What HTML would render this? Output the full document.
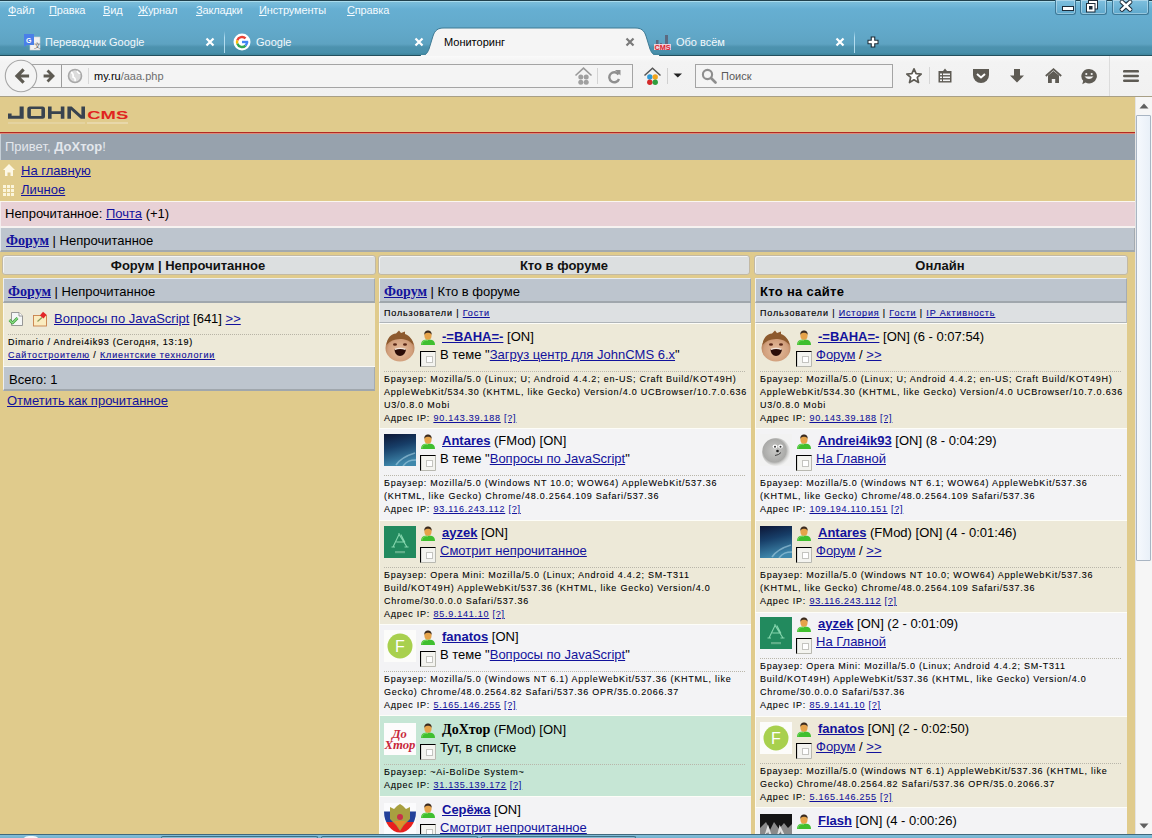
<!DOCTYPE html>
<html><head><meta charset="utf-8"><style>
html,body{margin:0;padding:0;width:1152px;height:838px;overflow:hidden;background:#e0cb8c;}
.t{position:absolute;white-space:nowrap;font-family:"Liberation Sans",sans-serif;color:#000;}
.r{position:absolute;}
a{color:inherit;text-decoration:underline;}
.sm{letter-spacing:0.76px;}
</style></head><body>
<div class="r" style="left:0px;top:0px;width:1152px;height:56px;background:linear-gradient(to bottom,#21414d 0px,#21414d 1px,#a9dcee 1px,#a9dcee 2px,#7cbdd8 2px,#72b8d9 5px,#66afd2 9px,#62a9ca 30px,#5ea3c2 44px,#4d92ae 47px,#4890ab 53px,#41879f 54px,#41879f 55px,#24505e 55px);"></div><div class="r" style="left:1055px;top:0px;width:19px;height:14px;border:1px solid #3d7896;border-top:none;border-radius:0 0 3px 3px;background:linear-gradient(#7fc0df,#5ea8cc);box-shadow:inset 0 0 0 1px rgba(255,255,255,0.35);"></div><div class="r" style="left:1080px;top:0px;width:25px;height:14px;border:1px solid #3d7896;border-top:none;border-radius:0 0 3px 3px;background:linear-gradient(#7fc0df,#5ea8cc);box-shadow:inset 0 0 0 1px rgba(255,255,255,0.35);"></div><div class="r" style="left:1112px;top:0px;width:35px;height:14px;border:1px solid #3d7896;border-top:none;border-radius:0 0 3px 3px;background:linear-gradient(#7fc0df,#5ea8cc);box-shadow:inset 0 0 0 1px rgba(255,255,255,0.35);"></div><svg class="r" style="left:1060px;top:4px;" width="16" height="10" viewBox="0 0 16 10"><rect x="2.5" y="2.5" width="11" height="4" fill="#fff" stroke="#1d2c3a" stroke-width="1"/></svg><svg class="r" style="left:1083px;top:0px;" width="18" height="14" viewBox="0 0 18 14"><rect x="5.5" y="0.5" width="9" height="8.5" fill="#fff" stroke="#1d2c3a"/><rect x="3.5" y="3.5" width="8.5" height="8.5" fill="#fff" stroke="#1d2c3a"/><rect x="6" y="6" width="3.5" height="3.5" fill="#1d2c3a"/></svg><svg class="r" style="left:1118px;top:0px;" width="16" height="12" viewBox="0 0 16 12"><path d="M4 2 L12 9.5 M12 2 L4 9.5" stroke="#1d2c3a" stroke-width="4.6" stroke-linecap="round"/><path d="M4 2 L12 9.5 M12 2 L4 9.5" stroke="#fff" stroke-width="2.6" stroke-linecap="square"/></svg><div class="t" style="left:8px;top:3.19px;font-size:11px;line-height:14px;color:#f4fbff;letter-spacing:-0.15px;"><span style="text-decoration:underline;">Ф</span>айл</div><div class="t" style="left:49px;top:3.19px;font-size:11px;line-height:14px;color:#f4fbff;letter-spacing:-0.15px;"><span style="text-decoration:underline;">П</span>равка</div><div class="t" style="left:103px;top:3.19px;font-size:11px;line-height:14px;color:#f4fbff;letter-spacing:-0.15px;"><span style="text-decoration:underline;">В</span>ид</div><div class="t" style="left:138px;top:3.19px;font-size:11px;line-height:14px;color:#f4fbff;letter-spacing:-0.15px;"><span style="text-decoration:underline;">Ж</span>урнал</div><div class="t" style="left:196px;top:3.19px;font-size:11px;line-height:14px;color:#f4fbff;letter-spacing:-0.15px;"><span style="text-decoration:underline;">З</span>акладки</div><div class="t" style="left:259px;top:3.19px;font-size:11px;line-height:14px;color:#f4fbff;letter-spacing:-0.15px;"><span style="text-decoration:underline;">И</span>нструменты</div><div class="t" style="left:347px;top:3.19px;font-size:11px;line-height:14px;color:#f4fbff;letter-spacing:-0.15px;"><span style="text-decoration:underline;">С</span>правка</div><div class="t" style="left:45px;top:35.19px;font-size:11px;line-height:14px;color:#f2f8fb;">Переводчик Google</div><div class="t" style="left:256px;top:35.19px;font-size:11px;line-height:14px;color:#f2f8fb;">Google</div><div class="t" style="left:676px;top:35.19px;font-size:11px;line-height:14px;color:#f2f8fb;">Обо всём</div><svg class="r" style="left:205px;top:36.5px;" width="10" height="10" viewBox="0 0 10 10"><path d="M1.5 1.5 L8.5 8.5 M8.5 1.5 L1.5 8.5" stroke="#fff" stroke-width="2.2"/></svg><svg class="r" style="left:414px;top:36.5px;" width="10" height="10" viewBox="0 0 10 10"><path d="M1.5 1.5 L8.5 8.5 M8.5 1.5 L1.5 8.5" stroke="#fff" stroke-width="2.2"/></svg><svg class="r" style="left:835px;top:36.5px;" width="10" height="10" viewBox="0 0 10 10"><path d="M1.5 1.5 L8.5 8.5 M8.5 1.5 L1.5 8.5" stroke="#fff" stroke-width="2.2"/></svg><div class="r" style="left:224px;top:31px;width:1px;height:22px;background:linear-gradient(rgba(200,235,250,0),rgba(200,235,250,0.8) 30%,rgba(200,235,250,0.8));"></div><div class="r" style="left:854px;top:31px;width:1px;height:22px;background:linear-gradient(rgba(200,235,250,0),rgba(200,235,250,0.8) 30%,rgba(200,235,250,0.8));"></div><svg class="r" style="left:420px;top:27px;" width="242" height="30" viewBox="0 0 242 30"><path d="M0 29 C5 29 7 27 9 22 L13 9 C15 3 18 1 24 1 L215 1 C221 1 224 3 226 9 L230 22 C232 27 234 29 240 29 V30 H0 Z" fill="#f5f5f5" stroke="#3e7a94" stroke-width="1"/></svg><div class="r" style="left:421px;top:55px;width:238px;height:2px;background:#f5f5f5;"></div><div class="t" style="left:444px;top:35.19px;font-size:11px;line-height:14px;color:#000;">Мониторинг</div><svg class="r" style="left:625px;top:36.5px;" width="10" height="10" viewBox="0 0 10 10"><path d="M1.5 1.5 L8.5 8.5 M8.5 1.5 L1.5 8.5" stroke="#7a7a7a" stroke-width="2.2"/></svg><svg class="r" style="left:866px;top:35px;" width="14" height="14" viewBox="0 0 14 14"><path d="M7 1.5 V12.5 M1.5 7 H12.5" stroke="#1b2a35" stroke-width="4.6"/><path d="M7 2.5 V11.5 M2.5 7 H11.5" stroke="#fff" stroke-width="2.4"/></svg><svg class="r" style="left:24px;top:34px;" width="17" height="17" viewBox="0 0 17 17"><rect x="6" y="3" width="10" height="13" fill="#f1f1f1" stroke="#d0d0d0" stroke-width="0.6"/><path d="M0 0 H10 V11 H3 L0 13 Z" fill="#4a7fe8"/><text x="2" y="8.5" font-size="7" font-family="Liberation Sans" font-weight="bold" fill="#fff">G</text><text x="10" y="14" font-size="7" font-family="Liberation Sans" fill="#555">文</text></svg><svg class="r" style="left:233px;top:33px;" width="18" height="18" viewBox="0 0 18 18"><circle cx="9" cy="9" r="8.5" fill="#fff"/><g fill="none" stroke-width="2.4"><path d="M12.54 5.46 A5 5 0 0 0 4.3 7.29" stroke="#ea4335"/><path d="M4.3 7.29 A5 5 0 0 0 4.3 10.71" stroke="#fbbc05"/><path d="M4.3 10.71 A5 5 0 0 0 12.54 12.54" stroke="#34a853"/><path d="M12.54 12.54 A5 5 0 0 0 14 9" stroke="#4285f4"/></g><rect x="9" y="7.8" width="6.2" height="2.4" fill="#4285f4"/></svg><svg class="r" style="left:654px;top:33px;" width="17" height="17" viewBox="0 0 17 17"><rect x="11" y="2" width="3" height="10" fill="#5b6a80"/><rect x="2" y="7" width="2.5" height="4" fill="#5b6a80"/><rect x="6" y="10" width="2" height="2" fill="#5b6a80"/><rect x="0" y="11" width="17" height="6" fill="#f0d0d8"/><text x="0.5" y="16.5" font-size="7" font-weight="bold" font-family="Liberation Sans" fill="#d8202e" textLength="16" lengthAdjust="spacingAndGlyphs">CMS</text></svg><div class="r" style="left:0px;top:56px;width:1152px;height:40px;background:linear-gradient(#fafafa,#f3f3f3 6px,#f1f1f1);"></div><div class="r" style="left:0px;top:96px;width:1152px;height:1px;background:#a89f86;"></div><div class="r" style="left:31px;top:64px;width:600px;height:22px;border:1px solid #a4a4a4;background:#f4f4f4;"></div><svg class="r" style="left:4px;top:59px;" width="34" height="34" viewBox="0 0 34 34"><circle cx="17" cy="17" r="15.7" fill="#f4f4f4" stroke="#a6a6a6" stroke-width="1.1"/><path d="M13.5 17 H23.5 M18.5 11.5 L13 17 L18.5 22.5" fill="none" stroke="#5d5a52" stroke-width="3.2" stroke-linejoin="miter" stroke-linecap="square"/></svg><svg class="r" style="left:40px;top:68px;" width="16" height="16" viewBox="0 0 16 16"><path d="M5 8 H11.5 M8.5 3.5 L13 8 L8.5 12.5" fill="none" stroke="#5d5a52" stroke-width="2.8" stroke-linecap="square"/></svg><div class="r" style="left:61px;top:65px;width:1px;height:22px;background:#9c9c9c;"></div><svg class="r" style="left:67px;top:68px;" width="16" height="16" viewBox="0 0 16 16"><circle cx="8" cy="8" r="6.5" fill="#dcdcdc" stroke="#a8a8a8" stroke-width="1.6"/><path d="M4 4 Q7 6 6 9 Q9 10 8 13 M10 3 Q12 6 13 5" fill="none" stroke="#fff" stroke-width="1.6"/></svg><div class="r" style="left:88px;top:68px;width:1px;height:16px;background:#d8d8d8;"></div><div class="t" style="left:94px;top:69.19px;font-size:11px;line-height:14px;"><span style="color:#000">my.ru</span><span style="color:#6d6d6d">/aaa.php</span></div><svg class="r" style="left:574px;top:67px;" width="19" height="18" viewBox="0 0 19 18"><path d="M1.5 8.5 L9.5 1.2 L17.5 8.5" fill="none" stroke="#9a9a9a" stroke-width="1.6"/><circle cx="6.8" cy="10" r="2.5" fill="#a0a0a0"/><circle cx="12.2" cy="10" r="2.5" fill="#a0a0a0"/><circle cx="6.8" cy="15.3" r="2.5" fill="#a0a0a0"/><circle cx="12.2" cy="15.3" r="2.5" fill="#a0a0a0"/></svg><div class="r" style="left:597px;top:68px;width:1px;height:16px;background:#d4d4d4;"></div><svg class="r" style="left:606px;top:69px;" width="16" height="15" viewBox="0 0 16 15"><path d="M12.5 5.5 A5 5 0 1 0 13 10" fill="none" stroke="#8f8f8f" stroke-width="2.4"/><path d="M9 1 L14.5 1 L14.5 6.5 Z" fill="#8f8f8f"/></svg><svg class="r" style="left:643px;top:67px;" width="19" height="18" viewBox="0 0 19 18"><path d="M1.5 8.5 L9.5 1.2 L17.5 8.5" fill="none" stroke="#555" stroke-width="1.5"/><circle cx="6.8" cy="10" r="2.7" fill="#2d9ad8"/><circle cx="12.2" cy="10" r="2.7" fill="#f2a51e"/><circle cx="6.8" cy="15.3" r="2.7" fill="#d32a2a"/><circle cx="12.2" cy="15.3" r="2.7" fill="#2e9e3e"/></svg><div class="r" style="left:667px;top:68px;width:1px;height:16px;background:#d0d0d0;"></div><svg class="r" style="left:673px;top:73px;" width="10" height="5" viewBox="0 0 10 5"><path d="M0.5 0.5 H9 L4.75 4.5 Z" fill="#222"/></svg><div class="r" style="left:695px;top:64px;width:196px;height:22px;border:1px solid #a4a4a4;background:#f4f4f4;"></div><svg class="r" style="left:701px;top:68px;" width="17" height="16" viewBox="0 0 17 16"><circle cx="6.5" cy="6.5" r="4.6" fill="none" stroke="#8e8e8e" stroke-width="2.1"/><path d="M10 10 L14.5 14.5" stroke="#8e8e8e" stroke-width="2.6" stroke-linecap="round"/></svg><div class="t" style="left:721px;top:69.19px;font-size:11px;line-height:14px;color:#5a5a5a;">Поиск</div><svg class="r" style="left:905px;top:67px;" width="18" height="18" viewBox="0 0 18 18"><path d="M9 1.8 L11.1 6.6 L16.2 7 L12.3 10.4 L13.5 15.5 L9 12.8 L4.5 15.5 L5.7 10.4 L1.8 7 L6.9 6.6 Z" fill="#fff" stroke="#5e5b54" stroke-width="1.7" stroke-linejoin="round"/></svg><div class="r" style="left:929px;top:67px;width:1px;height:17px;background:#d6d6d6;"></div><svg class="r" style="left:937px;top:67px;" width="16" height="17" viewBox="0 0 16 17"><path d="M1.5 4 H6 L8 1.5 L10 4 H14.5 V15.5 H1.5 Z" fill="#5e5b54"/><rect x="3" y="6.5" width="2" height="1.6" fill="#f4f4f4"/><rect x="6" y="6.5" width="7" height="1.6" fill="#f4f4f4"/><rect x="3" y="9.5" width="2" height="1.6" fill="#f4f4f4"/><rect x="6" y="9.5" width="7" height="1.6" fill="#f4f4f4"/><rect x="3" y="12.5" width="2" height="1.6" fill="#f4f4f4"/><rect x="6" y="12.5" width="7" height="1.6" fill="#f4f4f4"/></svg><svg class="r" style="left:972px;top:68px;" width="18" height="16" viewBox="0 0 18 16"><path d="M1 1 H17 V7 A8 8 0 0 1 1 7 Z" fill="#5e5b54"/><path d="M5 6 L9 9.5 L13 6" fill="none" stroke="#fff" stroke-width="2"/></svg><svg class="r" style="left:1009px;top:68px;" width="16" height="16" viewBox="0 0 16 16"><path d="M5 1 H11 V7.5 H15 L8 14.5 L1 7.5 H5 Z" fill="#5e5b54"/></svg><svg class="r" style="left:1045px;top:68px;" width="17" height="16" viewBox="0 0 17 16"><path d="M0.8 8 L8.5 1.2 L16.2 8" fill="none" stroke="#5e5b54" stroke-width="1.8"/><path d="M3 7.5 L8.5 3 L14 7.5 V15 H10.2 V11 H6.8 V15 H3 Z" fill="#5e5b54"/></svg><svg class="r" style="left:1080px;top:68px;" width="18" height="17" viewBox="0 0 18 17"><path d="M9 1 A7.8 7.2 0 1 1 5.5 14.6 L2.3 16.3 L3.2 12.8 A7.8 7.2 0 0 1 9 1 Z" fill="#5e5b54"/><circle cx="6.3" cy="6" r="1.1" fill="#f4f4f4"/><circle cx="11.7" cy="6" r="1.1" fill="#f4f4f4"/><path d="M4.5 8.5 Q9 13.5 13.5 8.5 Z" fill="#f4f4f4"/></svg><div class="r" style="left:1109px;top:56px;width:1px;height:40px;background:#dcdcdc;"></div><svg class="r" style="left:1122px;top:69px;" width="18" height="14" viewBox="0 0 18 14"><rect x="1" y="1" width="16" height="2.6" rx="1.2" fill="#5e5b54"/><rect x="1" y="5.7" width="16" height="2.6" rx="1.2" fill="#5e5b54"/><rect x="1" y="10.4" width="16" height="2.6" rx="1.2" fill="#5e5b54"/></svg><div class="r" style="left:0px;top:97px;width:1135px;height:35px;background:#e0cb8c;"></div><svg class="r" style="left:0px;top:100px;" width="140" height="30" viewBox="0 0 140 30"><g fill="#38434f" fill-rule="evenodd"><path d="M19.6 6.5 H23.7 V18.7 H8 V13.4 H11.6 V15.8 H19.6 Z"/><path d="M29.8 6.5 H42.5 Q45 6.5 45 9 V16.2 Q45 18.7 42.5 18.7 H29.8 Q27.3 18.7 27.3 16.2 V9 Q27.3 6.5 29.8 6.5 Z M30.9 9.1 V16.1 H41.4 V9.1 Z"/><path d="M48 6.5 H51.6 V11.3 H60.8 V6.5 H64.4 V18.7 H60.8 V13.9 H51.6 V18.7 H48 Z"/><path d="M67.4 6.5 H71.6 L81.4 15.2 V6.5 H85 V18.7 H80.8 L71 10 V18.7 H67.4 Z"/></g><text x="87.3" y="18.7" font-family="Liberation Sans" font-weight="bold" font-size="10" fill="#e02420" textLength="41" lengthAdjust="spacingAndGlyphs">CMS</text><rect x="8" y="22.5" width="77" height="1" fill="#e8dcb4"/><rect x="87" y="22.5" width="41" height="1" fill="#efe6c8"/></svg><div class="r" style="left:0px;top:132px;width:1135px;height:1px;background:#b32a22;"></div><div class="r" style="left:0px;top:133px;width:1135px;height:1px;background:#dc8a78;"></div><div class="r" style="left:0px;top:134px;width:1135px;height:26px;background:#97a2ad;border-left:1px solid #c5ced6;box-sizing:border-box;"></div><div class="t" style="left:5px;top:138.50px;font-size:13px;line-height:16px;color:#e3e7ec;">Привет, <b>ДоХтор</b>!</div><div class="r" style="left:0px;top:160px;width:1135px;height:41px;background:#e0cb8c;"></div><svg class="r" style="left:2px;top:163px;" width="14" height="14" viewBox="0 0 14 14"><path d="M1 7 L7 1 L13 7 H11 V13 H8.5 V9.5 H5.5 V13 H3 V7 Z" fill="#fdf8e6"/></svg><svg class="r" style="left:3px;top:185px;" width="12" height="12" viewBox="0 0 12 12"><rect x="0" y="0" width="3" height="3" fill="#fbf5dc"/><rect x="0" y="4" width="3" height="3" fill="#fbf5dc"/><rect x="0" y="8" width="3" height="3" fill="#fbf5dc"/><rect x="4" y="0" width="3" height="3" fill="#fbf5dc"/><rect x="4" y="4" width="3" height="3" fill="#fbf5dc"/><rect x="4" y="8" width="3" height="3" fill="#fbf5dc"/><rect x="8" y="0" width="3" height="3" fill="#fbf5dc"/><rect x="8" y="4" width="3" height="3" fill="#fbf5dc"/><rect x="8" y="8" width="3" height="3" fill="#fbf5dc"/></svg><div class="t" style="left:21px;top:162.80px;font-size:13px;line-height:16px;"><span style="color:#12129c;text-decoration:underline;">На главную</span></div><div class="t" style="left:21px;top:182.10px;font-size:13px;line-height:16px;"><span style="color:#12129c;text-decoration:underline;">Личное</span></div><div class="r" style="left:0px;top:201px;width:1135px;height:1px;background:#fbf7ef;"></div><div class="r" style="left:0px;top:202px;width:1135px;height:24px;background:#e8d1d6;border-left:1px solid #f4ecee;box-sizing:border-box;"></div><div class="r" style="left:0px;top:226px;width:1135px;height:2px;background:#f6f2f0;"></div><div class="t" style="left:5px;top:206.30px;font-size:13px;line-height:16px;">Непрочитанное: <span style="color:#12129c;text-decoration:underline;">Почта</span> (+1)</div><div class="r" style="left:0px;top:228px;width:1135px;height:24px;background:#bdc5ce;border-left:1px solid #e6eaee;border-right:1px solid #a3aab0;border-bottom:2px solid #a2a9ae;box-sizing:border-box;"></div><div class="t" style="left:6px;top:232.50px;font-size:13px;line-height:16px;"><span style="color:#12129c;text-decoration:underline;font-weight:bold;font-family:'Liberation Serif';font-size:14px;">Форум</span> | Непрочитанное</div><div class="r" style="left:2px;top:255px;width:374px;height:20px;box-sizing:border-box;border:1px solid #c2b9a4;border-radius:3px;background:#dcdfe0;box-shadow:inset 1px 1px 0 #f3f4f4;"></div><div class="t" style="left:2px;top:257.50px;font-size:13px;line-height:16px;width:372px;text-align:center;font-weight:bold;color:#111;">Форум | Непрочитанное</div><div class="r" style="left:378px;top:255px;width:372px;height:20px;box-sizing:border-box;border:1px solid #c2b9a4;border-radius:3px;background:#dcdfe0;box-shadow:inset 1px 1px 0 #f3f4f4;"></div><div class="t" style="left:378px;top:257.50px;font-size:13px;line-height:16px;width:372px;text-align:center;font-weight:bold;color:#111;">Кто в форуме</div><div class="r" style="left:754px;top:255px;width:374px;height:20px;box-sizing:border-box;border:1px solid #c2b9a4;border-radius:3px;background:#dcdfe0;box-shadow:inset 1px 1px 0 #f3f4f4;"></div><div class="t" style="left:754px;top:257.50px;font-size:13px;line-height:16px;width:372px;text-align:center;font-weight:bold;color:#111;">Онлайн</div><div class="r" style="left:3px;top:278px;width:372px;height:25px;box-sizing:border-box;background:#bdc5ce;border-top:1px solid #e9ecef;border-left:1px solid #eef0f2;border-right:1px solid #a5acb2;border-bottom:2px solid #a0a7ad;"></div><div class="t" style="left:8px;top:283.50px;font-size:13px;line-height:16px;"><span style="color:#12129c;text-decoration:underline;font-weight:bold;font-family:'Liberation Serif';font-size:14px;">Форум</span> | Непрочитанное</div><div class="r" style="left:3px;top:303px;width:372px;height:63px;background:#ede9d8;border-left:1px solid #faf8f0;box-sizing:border-box;"></div><svg class="r" style="left:8px;top:311px;" width="17" height="16" viewBox="0 0 17 16"><path d="M3.5 1.5 H11 L14.5 5 V14.5 H3.5 Z" fill="#f4f6f6" stroke="#8c8c8c" stroke-width="0.9"/><path d="M11 1.5 V5 H14.5" fill="#fff" stroke="#8c8c8c" stroke-width="0.9"/><path d="M1.5 9 L4.5 12 L9.5 7" fill="none" stroke="#3d9a3a" stroke-width="2.6" stroke-linejoin="round"/><path d="M1.5 9 L4.5 12 L9.5 7" fill="none" stroke="#8ee08a" stroke-width="1.1"/></svg><svg class="r" style="left:32px;top:311px;" width="17" height="16" viewBox="0 0 17 16"><rect x="1.5" y="4.5" width="13" height="10.5" fill="#fbecc0" stroke="#c8804a" stroke-width="0.9"/><path d="M5.5 10.5 L10 6.5" stroke="#8a9a5a" stroke-width="1.1"/><path d="M11 0.8 L14.6 3.8 L11.5 7.6 L7.9 4.6 Z" fill="#e2262a"/></svg><div class="t" style="left:54px;top:310.50px;font-size:13px;line-height:16px;"><span style="color:#12129c;text-decoration:underline;">Вопросы по JavaScript</span> [641] <span style="color:#12129c;text-decoration:underline;">&gt;&gt;</span></div><div class="r" style="left:8px;top:334px;width:362px;height:1px;background-image:linear-gradient(to right,#b8b4a6 50%,transparent 50%);background-size:2px 1px;"></div><div class="t" style="left:8px;top:336.78px;font-size:9px;line-height:11px;letter-spacing:0.76px;-webkit-text-stroke-width:0.15px;">Dimario / Andrei4ik93 (Сегодня, 13:19)</div><div class="t" style="left:8px;top:349.88px;font-size:9px;line-height:11px;letter-spacing:0.85px;-webkit-text-stroke-width:0.15px;"><span style="color:#12129c;text-decoration:underline;">Сайтостроителю</span> / <span style="color:#12129c;text-decoration:underline;">Клиентские технологии</span></div><div class="r" style="left:3px;top:366px;width:372px;height:1px;background:#fbfaf6;"></div><div class="r" style="left:3px;top:367px;width:372px;height:24px;box-sizing:border-box;background:#bdc5ce;border-left:1px solid #eef0f2;border-right:1px solid #a5acb2;border-bottom:2px solid #a0a7ad;"></div><div class="t" style="left:9px;top:372.00px;font-size:13px;line-height:16px;">Всего: 1</div><div class="t" style="left:7px;top:393.10px;font-size:13px;line-height:16px;"><span style="color:#12129c;text-decoration:underline;">Отметить как прочитанное</span></div><div class="r" style="left:379px;top:278px;width:372px;height:25px;box-sizing:border-box;background:#bdc5ce;border-top:1px solid #e9ecef;border-left:1px solid #eef0f2;border-right:1px solid #a5acb2;border-bottom:2px solid #a0a7ad;"></div><div class="t" style="left:384px;top:283.50px;font-size:13px;line-height:16px;"><span style="color:#12129c;text-decoration:underline;font-weight:bold;font-family:'Liberation Serif';font-size:14px;">Форум</span> | Кто в форуме</div><div class="r" style="left:379px;top:303px;width:372px;height:20px;box-sizing:border-box;background:#dde0e2;border-left:1px solid #f2f3f4;border-right:1px solid #b9bec2;border-bottom:1px solid #b0b5b9;"></div><div class="t" style="left:384px;top:308.38px;font-size:9px;line-height:11px;letter-spacing:0.84px;-webkit-text-stroke-width:0.15px;">Пользователи | <span style="color:#12129c;text-decoration:underline;">Гости</span></div><div class="r" style="left:755px;top:278px;width:372px;height:25px;box-sizing:border-box;background:#bdc5ce;border-top:1px solid #e9ecef;border-left:1px solid #eef0f2;border-right:1px solid #a5acb2;border-bottom:2px solid #a0a7ad;"></div><div class="t" style="left:760px;top:283.50px;font-size:13px;line-height:16px;"><b style="letter-spacing:0.3px">Кто на сайте</b></div><div class="r" style="left:755px;top:303px;width:372px;height:20px;box-sizing:border-box;background:#dde0e2;border-left:1px solid #f2f3f4;border-right:1px solid #b9bec2;border-bottom:1px solid #b0b5b9;"></div><div class="t" style="left:760px;top:308.38px;font-size:9px;line-height:11px;letter-spacing:0.84px;-webkit-text-stroke-width:0.15px;">Пользователи | <span style="color:#12129c;text-decoration:underline;">История</span> | <span style="color:#12129c;text-decoration:underline;">Гости</span> | <span style="color:#12129c;text-decoration:underline;">IP Активность</span></div><div class="r" style="left:379px;top:323px;width:372px;height:1px;background:#fdfdf8;"></div><div class="r" style="left:379px;top:324px;width:372px;height:104px;background:#ede9d8;border-left:1px solid #fbfaf2;box-sizing:border-box;"></div><svg class="r" style="left:384px;top:329.5px;" width="32" height="32" viewBox="0 0 32 32"><defs><radialGradient id="gb384" cx="0.5" cy="0.6" r="0.6"><stop offset="0" stop-color="#e7bfa0"/><stop offset="0.7" stop-color="#d19f7c"/><stop offset="1" stop-color="#a87048"/></radialGradient></defs><ellipse cx="16" cy="18" rx="14.5" ry="13.5" fill="url(#gb384)"/><path d="M2.5 15 C3 8 7 4 12 3.5 L15 0.5 L17 3 L21 1.5 L21 4 C26 6 29 10 29.5 15 C26 10.5 21 9 16 9 C10 9 5.5 11 2.5 15 Z" fill="#8d5a2e"/><ellipse cx="11" cy="14.5" rx="2" ry="1.2" fill="#5a2818"/><ellipse cx="21" cy="14.5" rx="2" ry="1.2" fill="#5a2818"/><path d="M10.5 19.5 Q16 17.5 22 19.5 Q21 26 16 26 Q11 26 10.5 19.5 Z" fill="#2a0c08"/><path d="M11 19.3 Q16 17.3 21.5 19.3" fill="none" stroke="#f2e6dc" stroke-width="1.3"/></svg><svg class="r" style="left:420px;top:330px;" width="16" height="16" viewBox="0 0 16 16"><path d="M1 15 C1 10.5 4 9.5 8 9.5 C12 9.5 15 10.5 15 15 Z" fill="#3fbf2f"/><path d="M2 14.5 C2 11 4.5 10.3 8 10.3" fill="none" stroke="#8ae070" stroke-width="0.8"/><ellipse cx="8" cy="5.6" rx="3.6" ry="4.2" fill="#e5a34a"/><path d="M4.3 5 C4.2 1.5 6 0.5 8 0.5 C10 0.5 11.8 1.5 11.7 5 C11 3.2 9.5 2.8 8 2.8 C6.5 2.8 5 3.2 4.3 5 Z" fill="#3a2a1e"/></svg><svg class="r" style="left:420px;top:351px;" width="16" height="16" viewBox="0 0 16 16"><rect x="0" y="0" width="16" height="16" fill="#f3f3ef"/><path d="M0.5 16 V0.5 H16" fill="none" stroke="#000" stroke-width="1.2"/><path d="M15.5 0.5 V15.5 H0.5" fill="none" stroke="#b8b8b0" stroke-width="1"/><rect x="6.5" y="5.5" width="6" height="6" fill="#fff" stroke="#c4c4c0"/></svg><div class="t" style="left:442px;top:328.50px;font-size:13px;line-height:16px;"><span style="color:#12129c;text-decoration:underline;font-weight:bold;">-=BAHA=-</span> [ON]</div><div class="t" style="left:440px;top:346.50px;font-size:13px;line-height:16px;">В теме "<span style="color:#12129c;text-decoration:underline;">Загруз центр для JohnCMS 6.x</span>"</div><div class="r" style="left:384px;top:371px;width:362px;height:1px;background-image:linear-gradient(to right,#b9b6aa 50%,transparent 50%);background-size:2px 1px;"></div><div class="t" style="left:384px;top:374.38px;font-size:9px;line-height:11px;letter-spacing:0.76px;-webkit-text-stroke-width:0.08px;">Браузер: Mozilla/5.0 (Linux; U; Android 4.4.2; en-US; Craft Build/KOT49H)</div><div class="t" style="left:384px;top:387.33px;font-size:9px;line-height:11px;letter-spacing:0.76px;-webkit-text-stroke-width:0.08px;">AppleWebKit/534.30 (KHTML, like Gecko) Version/4.0 UCBrowser/10.7.0.636</div><div class="t" style="left:384px;top:400.28px;font-size:9px;line-height:11px;letter-spacing:0.76px;-webkit-text-stroke-width:0.08px;">U3/0.8.0 Mobi</div><div class="t" style="left:384px;top:413.23px;font-size:9px;line-height:11px;letter-spacing:0.76px;-webkit-text-stroke-width:0.08px;">Адрес IP: <span style="color:#12129c;text-decoration:underline;">90.143.39.188</span> <span style="color:#12129c;text-decoration:underline;">[?]</span></div><div class="r" style="left:379px;top:428px;width:372px;height:1px;background:#fdfdf8;"></div><div class="r" style="left:379px;top:429px;width:372px;height:91px;background:#f3f3f5;border-left:1px solid #fbfaf2;box-sizing:border-box;"></div><svg class="r" style="left:384px;top:433.5px;" width="32" height="32" viewBox="0 0 32 32"><defs><linearGradient id="ga384" x1="0" y1="0" x2="0.25" y2="1"><stop offset="0" stop-color="#0c1535"/><stop offset="0.45" stop-color="#173e68"/><stop offset="1" stop-color="#3f88ac"/></linearGradient></defs><rect width="32" height="32" fill="url(#ga384)"/><path d="M12 31 C16 25 21 22 31 19 M19 32 C23 27 26 26 32 26" stroke="#a8d0e2" stroke-width="1.6" fill="none" opacity="0.6"/></svg><svg class="r" style="left:420px;top:434px;" width="16" height="16" viewBox="0 0 16 16"><path d="M1 15 C1 10.5 4 9.5 8 9.5 C12 9.5 15 10.5 15 15 Z" fill="#3fbf2f"/><path d="M2 14.5 C2 11 4.5 10.3 8 10.3" fill="none" stroke="#8ae070" stroke-width="0.8"/><ellipse cx="8" cy="5.6" rx="3.6" ry="4.2" fill="#e5a34a"/><path d="M4.3 5 C4.2 1.5 6 0.5 8 0.5 C10 0.5 11.8 1.5 11.7 5 C11 3.2 9.5 2.8 8 2.8 C6.5 2.8 5 3.2 4.3 5 Z" fill="#3a2a1e"/></svg><svg class="r" style="left:420px;top:455px;" width="16" height="16" viewBox="0 0 16 16"><rect x="0" y="0" width="16" height="16" fill="#f3f3ef"/><path d="M0.5 16 V0.5 H16" fill="none" stroke="#000" stroke-width="1.2"/><path d="M15.5 0.5 V15.5 H0.5" fill="none" stroke="#b8b8b0" stroke-width="1"/><rect x="6.5" y="5.5" width="6" height="6" fill="#fff" stroke="#c4c4c0"/></svg><div class="t" style="left:442px;top:432.50px;font-size:13px;line-height:16px;"><span style="color:#12129c;text-decoration:underline;font-weight:bold;">Antares</span> (FMod) [ON]</div><div class="t" style="left:440px;top:450.50px;font-size:13px;line-height:16px;">В теме "<span style="color:#12129c;text-decoration:underline;">Вопросы по JavaScript</span>"</div><div class="r" style="left:384px;top:475px;width:362px;height:1px;background-image:linear-gradient(to right,#b9b6aa 50%,transparent 50%);background-size:2px 1px;"></div><div class="t" style="left:384px;top:478.38px;font-size:9px;line-height:11px;letter-spacing:0.76px;-webkit-text-stroke-width:0.08px;">Браузер: Mozilla/5.0 (Windows NT 10.0; WOW64) AppleWebKit/537.36</div><div class="t" style="left:384px;top:491.33px;font-size:9px;line-height:11px;letter-spacing:0.76px;-webkit-text-stroke-width:0.08px;">(KHTML, like Gecko) Chrome/48.0.2564.109 Safari/537.36</div><div class="t" style="left:384px;top:504.28px;font-size:9px;line-height:11px;letter-spacing:0.76px;-webkit-text-stroke-width:0.08px;">Адрес IP: <span style="color:#12129c;text-decoration:underline;">93.116.243.112</span> <span style="color:#12129c;text-decoration:underline;">[?]</span></div><div class="r" style="left:379px;top:520px;width:372px;height:1px;background:#fdfdf8;"></div><div class="r" style="left:379px;top:521px;width:372px;height:103px;background:#ede9d8;border-left:1px solid #fbfaf2;box-sizing:border-box;"></div><svg class="r" style="left:384px;top:525.5px;" width="32" height="32" viewBox="0 0 32 32"><rect width="32" height="32" fill="#228a5e"/><path d="M9 21 L15.5 7.5 M14.5 7.5 L23 21 M16.8 8.5 L21 16.5 M12.3 16 H20.3 M7.5 21 H11 M20.5 21 H24.5" stroke="#86d6ae" stroke-width="1.1" fill="none"/><rect x="11" y="25" width="10" height="2.2" fill="#5fae88"/></svg><svg class="r" style="left:420px;top:526px;" width="16" height="16" viewBox="0 0 16 16"><path d="M1 15 C1 10.5 4 9.5 8 9.5 C12 9.5 15 10.5 15 15 Z" fill="#3fbf2f"/><path d="M2 14.5 C2 11 4.5 10.3 8 10.3" fill="none" stroke="#8ae070" stroke-width="0.8"/><ellipse cx="8" cy="5.6" rx="3.6" ry="4.2" fill="#e5a34a"/><path d="M4.3 5 C4.2 1.5 6 0.5 8 0.5 C10 0.5 11.8 1.5 11.7 5 C11 3.2 9.5 2.8 8 2.8 C6.5 2.8 5 3.2 4.3 5 Z" fill="#3a2a1e"/></svg><svg class="r" style="left:420px;top:547px;" width="16" height="16" viewBox="0 0 16 16"><rect x="0" y="0" width="16" height="16" fill="#f3f3ef"/><path d="M0.5 16 V0.5 H16" fill="none" stroke="#000" stroke-width="1.2"/><path d="M15.5 0.5 V15.5 H0.5" fill="none" stroke="#b8b8b0" stroke-width="1"/><rect x="6.5" y="5.5" width="6" height="6" fill="#fff" stroke="#c4c4c0"/></svg><div class="t" style="left:442px;top:524.50px;font-size:13px;line-height:16px;"><span style="color:#12129c;text-decoration:underline;font-weight:bold;">ayzek</span> [ON]</div><div class="t" style="left:440px;top:542.50px;font-size:13px;line-height:16px;"><span style="color:#12129c;text-decoration:underline;">Смотрит непрочитанное</span></div><div class="r" style="left:384px;top:567px;width:362px;height:1px;background-image:linear-gradient(to right,#b9b6aa 50%,transparent 50%);background-size:2px 1px;"></div><div class="t" style="left:384px;top:570.38px;font-size:9px;line-height:11px;letter-spacing:0.76px;-webkit-text-stroke-width:0.08px;">Браузер: Opera Mini: Mozilla/5.0 (Linux; Android 4.4.2; SM-T311</div><div class="t" style="left:384px;top:583.33px;font-size:9px;line-height:11px;letter-spacing:0.76px;-webkit-text-stroke-width:0.08px;">Build/KOT49H) AppleWebKit/537.36 (KHTML, like Gecko) Version/4.0</div><div class="t" style="left:384px;top:596.28px;font-size:9px;line-height:11px;letter-spacing:0.76px;-webkit-text-stroke-width:0.08px;">Chrome/30.0.0.0 Safari/537.36</div><div class="t" style="left:384px;top:609.23px;font-size:9px;line-height:11px;letter-spacing:0.76px;-webkit-text-stroke-width:0.08px;">Адрес IP: <span style="color:#12129c;text-decoration:underline;">85.9.141.10</span> <span style="color:#12129c;text-decoration:underline;">[?]</span></div><div class="r" style="left:379px;top:624px;width:372px;height:1px;background:#fdfdf8;"></div><div class="r" style="left:379px;top:625px;width:372px;height:90px;background:#f3f3f5;border-left:1px solid #fbfaf2;box-sizing:border-box;"></div><svg class="r" style="left:384px;top:629.5px;" width="32" height="32" viewBox="0 0 32 32"><rect width="32" height="32" fill="#fcfcfa"/><circle cx="16" cy="16" r="12.5" fill="#a8d04e"/><text x="11" y="22" font-family="Liberation Sans" font-size="16" fill="#fff">F</text></svg><svg class="r" style="left:420px;top:630px;" width="16" height="16" viewBox="0 0 16 16"><path d="M1 15 C1 10.5 4 9.5 8 9.5 C12 9.5 15 10.5 15 15 Z" fill="#3fbf2f"/><path d="M2 14.5 C2 11 4.5 10.3 8 10.3" fill="none" stroke="#8ae070" stroke-width="0.8"/><ellipse cx="8" cy="5.6" rx="3.6" ry="4.2" fill="#e5a34a"/><path d="M4.3 5 C4.2 1.5 6 0.5 8 0.5 C10 0.5 11.8 1.5 11.7 5 C11 3.2 9.5 2.8 8 2.8 C6.5 2.8 5 3.2 4.3 5 Z" fill="#3a2a1e"/></svg><svg class="r" style="left:420px;top:651px;" width="16" height="16" viewBox="0 0 16 16"><rect x="0" y="0" width="16" height="16" fill="#f3f3ef"/><path d="M0.5 16 V0.5 H16" fill="none" stroke="#000" stroke-width="1.2"/><path d="M15.5 0.5 V15.5 H0.5" fill="none" stroke="#b8b8b0" stroke-width="1"/><rect x="6.5" y="5.5" width="6" height="6" fill="#fff" stroke="#c4c4c0"/></svg><div class="t" style="left:442px;top:628.50px;font-size:13px;line-height:16px;"><span style="color:#12129c;text-decoration:underline;font-weight:bold;">fanatos</span> [ON]</div><div class="t" style="left:440px;top:646.50px;font-size:13px;line-height:16px;">В теме "<span style="color:#12129c;text-decoration:underline;">Вопросы по JavaScript</span>"</div><div class="r" style="left:384px;top:671px;width:362px;height:1px;background-image:linear-gradient(to right,#b9b6aa 50%,transparent 50%);background-size:2px 1px;"></div><div class="t" style="left:384px;top:674.38px;font-size:9px;line-height:11px;letter-spacing:0.76px;-webkit-text-stroke-width:0.08px;">Браузер: Mozilla/5.0 (Windows NT 6.1) AppleWebKit/537.36 (KHTML, like</div><div class="t" style="left:384px;top:687.33px;font-size:9px;line-height:11px;letter-spacing:0.76px;-webkit-text-stroke-width:0.08px;">Gecko) Chrome/48.0.2564.82 Safari/537.36 OPR/35.0.2066.37</div><div class="t" style="left:384px;top:700.28px;font-size:9px;line-height:11px;letter-spacing:0.76px;-webkit-text-stroke-width:0.08px;">Адрес IP: <span style="color:#12129c;text-decoration:underline;">5.165.146.255</span> <span style="color:#12129c;text-decoration:underline;">[?]</span></div><div class="r" style="left:379px;top:715px;width:372px;height:1px;background:#fdfdf8;"></div><div class="r" style="left:379px;top:716px;width:372px;height:80px;background:#c6e6d5;border-left:1px solid #fbfaf2;box-sizing:border-box;"></div><svg class="r" style="left:384px;top:722.5px;" width="32" height="32" viewBox="0 0 32 32"><rect width="32" height="32" fill="#fdfcfc"/><text x="8" y="15" font-family="Liberation Serif" font-style="italic" font-weight="bold" font-size="12.5" fill="#c8283a">До</text><text x="0.5" y="26" font-family="Liberation Serif" font-style="italic" font-weight="bold" font-size="12.5" fill="#c8283a" textLength="31" lengthAdjust="spacingAndGlyphs">Хтор</text></svg><svg class="r" style="left:420px;top:723px;" width="16" height="16" viewBox="0 0 16 16"><path d="M1 15 C1 10.5 4 9.5 8 9.5 C12 9.5 15 10.5 15 15 Z" fill="#3fbf2f"/><path d="M2 14.5 C2 11 4.5 10.3 8 10.3" fill="none" stroke="#8ae070" stroke-width="0.8"/><ellipse cx="8" cy="5.6" rx="3.6" ry="4.2" fill="#e5a34a"/><path d="M4.3 5 C4.2 1.5 6 0.5 8 0.5 C10 0.5 11.8 1.5 11.7 5 C11 3.2 9.5 2.8 8 2.8 C6.5 2.8 5 3.2 4.3 5 Z" fill="#3a2a1e"/></svg><svg class="r" style="left:420px;top:744px;" width="16" height="16" viewBox="0 0 16 16"><rect x="0" y="0" width="16" height="16" fill="#f3f3ef"/><path d="M0.5 16 V0.5 H16" fill="none" stroke="#000" stroke-width="1.2"/><path d="M15.5 0.5 V15.5 H0.5" fill="none" stroke="#b8b8b0" stroke-width="1"/><rect x="6.5" y="5.5" width="6" height="6" fill="#fff" stroke="#c4c4c0"/></svg><div class="t" style="left:442px;top:721.50px;font-size:13px;line-height:16px;"><b style="font-family:'Liberation Serif';font-size:14px">ДоХтор</b> (FMod) [ON]</div><div class="t" style="left:440px;top:739.50px;font-size:13px;line-height:16px;">Тут, в списке</div><div class="r" style="left:384px;top:764px;width:362px;height:1px;background-image:linear-gradient(to right,#b9b6aa 50%,transparent 50%);background-size:2px 1px;"></div><div class="t" style="left:384px;top:767.38px;font-size:9px;line-height:11px;letter-spacing:0.76px;-webkit-text-stroke-width:0.08px;">Браузер: ~Ai-BoliDe System~</div><div class="t" style="left:384px;top:780.33px;font-size:9px;line-height:11px;letter-spacing:0.76px;-webkit-text-stroke-width:0.08px;">Адрес IP: <span style="color:#12129c;text-decoration:underline;">31.135.139.172</span> <span style="color:#12129c;text-decoration:underline;">[?]</span></div><div class="r" style="left:379px;top:796px;width:372px;height:1px;background:#fdfdf8;"></div><div class="r" style="left:379px;top:797px;width:372px;height:59px;background:#f3f3f5;border-left:1px solid #fbfaf2;box-sizing:border-box;"></div><svg class="r" style="left:384px;top:802.5px;" width="32" height="32" viewBox="0 0 32 32"><defs><clipPath id="cs384"><path d="M0 8.5 H32 A16 21 0 0 1 0 8.5 Z"/></clipPath></defs><rect width="32" height="32" fill="#fbfbfd"/><g clip-path="url(#cs384)"><rect y="8" width="32" height="11" fill="#23409a"/><rect y="19" width="32" height="14" fill="#e8201e"/></g><path d="M6 4 L10 6 L13 3 L16 1 L19 3 L22 6 L26 4 L26 16 L20 22 L16 28 L12 22 L6 16 Z" fill="#a8a040"/><path d="M10 18 L16 26 L22 18 Z" fill="#e0902a"/><circle cx="16" cy="14" r="3" fill="#c8304a"/></svg><svg class="r" style="left:420px;top:803px;" width="16" height="16" viewBox="0 0 16 16"><path d="M1 15 C1 10.5 4 9.5 8 9.5 C12 9.5 15 10.5 15 15 Z" fill="#3fbf2f"/><path d="M2 14.5 C2 11 4.5 10.3 8 10.3" fill="none" stroke="#8ae070" stroke-width="0.8"/><ellipse cx="8" cy="5.6" rx="3.6" ry="4.2" fill="#e5a34a"/><path d="M4.3 5 C4.2 1.5 6 0.5 8 0.5 C10 0.5 11.8 1.5 11.7 5 C11 3.2 9.5 2.8 8 2.8 C6.5 2.8 5 3.2 4.3 5 Z" fill="#3a2a1e"/></svg><svg class="r" style="left:420px;top:824px;" width="16" height="16" viewBox="0 0 16 16"><rect x="0" y="0" width="16" height="16" fill="#f3f3ef"/><path d="M0.5 16 V0.5 H16" fill="none" stroke="#000" stroke-width="1.2"/><path d="M15.5 0.5 V15.5 H0.5" fill="none" stroke="#b8b8b0" stroke-width="1"/><rect x="6.5" y="5.5" width="6" height="6" fill="#fff" stroke="#c4c4c0"/></svg><div class="t" style="left:442px;top:801.50px;font-size:13px;line-height:16px;"><span style="color:#12129c;text-decoration:underline;font-weight:bold;">Серёжа</span> [ON]</div><div class="t" style="left:440px;top:819.50px;font-size:13px;line-height:16px;"><span style="color:#12129c;text-decoration:underline;">Смотрит непрочитанное</span></div><div class="r" style="left:384px;top:844px;width:362px;height:1px;background-image:linear-gradient(to right,#b9b6aa 50%,transparent 50%);background-size:2px 1px;"></div><div class="r" style="left:755px;top:323px;width:372px;height:1px;background:#fdfdf8;"></div><div class="r" style="left:755px;top:324px;width:372px;height:104px;background:#ede9d8;border-left:1px solid #fbfaf2;box-sizing:border-box;"></div><svg class="r" style="left:760px;top:329.5px;" width="32" height="32" viewBox="0 0 32 32"><defs><radialGradient id="gb760" cx="0.5" cy="0.6" r="0.6"><stop offset="0" stop-color="#e7bfa0"/><stop offset="0.7" stop-color="#d19f7c"/><stop offset="1" stop-color="#a87048"/></radialGradient></defs><ellipse cx="16" cy="18" rx="14.5" ry="13.5" fill="url(#gb760)"/><path d="M2.5 15 C3 8 7 4 12 3.5 L15 0.5 L17 3 L21 1.5 L21 4 C26 6 29 10 29.5 15 C26 10.5 21 9 16 9 C10 9 5.5 11 2.5 15 Z" fill="#8d5a2e"/><ellipse cx="11" cy="14.5" rx="2" ry="1.2" fill="#5a2818"/><ellipse cx="21" cy="14.5" rx="2" ry="1.2" fill="#5a2818"/><path d="M10.5 19.5 Q16 17.5 22 19.5 Q21 26 16 26 Q11 26 10.5 19.5 Z" fill="#2a0c08"/><path d="M11 19.3 Q16 17.3 21.5 19.3" fill="none" stroke="#f2e6dc" stroke-width="1.3"/></svg><svg class="r" style="left:796px;top:330px;" width="16" height="16" viewBox="0 0 16 16"><path d="M1 15 C1 10.5 4 9.5 8 9.5 C12 9.5 15 10.5 15 15 Z" fill="#3fbf2f"/><path d="M2 14.5 C2 11 4.5 10.3 8 10.3" fill="none" stroke="#8ae070" stroke-width="0.8"/><ellipse cx="8" cy="5.6" rx="3.6" ry="4.2" fill="#e5a34a"/><path d="M4.3 5 C4.2 1.5 6 0.5 8 0.5 C10 0.5 11.8 1.5 11.7 5 C11 3.2 9.5 2.8 8 2.8 C6.5 2.8 5 3.2 4.3 5 Z" fill="#3a2a1e"/></svg><svg class="r" style="left:796px;top:351px;" width="16" height="16" viewBox="0 0 16 16"><rect x="0" y="0" width="16" height="16" fill="#f3f3ef"/><path d="M0.5 16 V0.5 H16" fill="none" stroke="#000" stroke-width="1.2"/><path d="M15.5 0.5 V15.5 H0.5" fill="none" stroke="#b8b8b0" stroke-width="1"/><rect x="6.5" y="5.5" width="6" height="6" fill="#fff" stroke="#c4c4c0"/></svg><div class="t" style="left:818px;top:328.50px;font-size:13px;line-height:16px;"><span style="color:#12129c;text-decoration:underline;font-weight:bold;">-=BAHA=-</span> [ON] (6 - 0:07:54)</div><div class="t" style="left:816px;top:346.50px;font-size:13px;line-height:16px;"><span style="color:#12129c;text-decoration:underline;">Форум</span> / <span style="color:#12129c;text-decoration:underline;">&gt;&gt;</span></div><div class="r" style="left:760px;top:371px;width:362px;height:1px;background-image:linear-gradient(to right,#b9b6aa 50%,transparent 50%);background-size:2px 1px;"></div><div class="t" style="left:760px;top:374.38px;font-size:9px;line-height:11px;letter-spacing:0.76px;-webkit-text-stroke-width:0.08px;">Браузер: Mozilla/5.0 (Linux; U; Android 4.4.2; en-US; Craft Build/KOT49H)</div><div class="t" style="left:760px;top:387.33px;font-size:9px;line-height:11px;letter-spacing:0.76px;-webkit-text-stroke-width:0.08px;">AppleWebKit/534.30 (KHTML, like Gecko) Version/4.0 UCBrowser/10.7.0.636</div><div class="t" style="left:760px;top:400.28px;font-size:9px;line-height:11px;letter-spacing:0.76px;-webkit-text-stroke-width:0.08px;">U3/0.8.0 Mobi</div><div class="t" style="left:760px;top:413.23px;font-size:9px;line-height:11px;letter-spacing:0.76px;-webkit-text-stroke-width:0.08px;">Адрес IP: <span style="color:#12129c;text-decoration:underline;">90.143.39.188</span> <span style="color:#12129c;text-decoration:underline;">[?]</span></div><div class="r" style="left:755px;top:428px;width:372px;height:1px;background:#fdfdf8;"></div><div class="r" style="left:755px;top:429px;width:372px;height:91px;background:#f3f3f5;border-left:1px solid #fbfaf2;box-sizing:border-box;"></div><svg class="r" style="left:760px;top:433.5px;" width="32" height="32" viewBox="0 0 32 32"><defs><radialGradient id="gn760" cx="0.45" cy="0.45" r="0.55"><stop offset="0" stop-color="#c8c8c6"/><stop offset="0.75" stop-color="#aaaaa8"/><stop offset="1" stop-color="#d8d8d6" stop-opacity="0.3"/></radialGradient></defs><rect width="32" height="32" fill="#f2f2f2"/><ellipse cx="16" cy="18" rx="14" ry="14" fill="url(#gn760)"/><ellipse cx="15" cy="12.5" rx="2.4" ry="2" fill="#fff"/><ellipse cx="20.5" cy="12.5" rx="2.4" ry="2" fill="#fff"/><circle cx="15" cy="12.8" r="1" fill="#333"/><circle cx="20.5" cy="12.8" r="1" fill="#333"/><circle cx="17.5" cy="17" r="1.3" fill="#222"/><path d="M15 21.5 Q19 21 21 18.5" stroke="#333" stroke-width="0.9" fill="none"/></svg><svg class="r" style="left:796px;top:434px;" width="16" height="16" viewBox="0 0 16 16"><path d="M1 15 C1 10.5 4 9.5 8 9.5 C12 9.5 15 10.5 15 15 Z" fill="#3fbf2f"/><path d="M2 14.5 C2 11 4.5 10.3 8 10.3" fill="none" stroke="#8ae070" stroke-width="0.8"/><ellipse cx="8" cy="5.6" rx="3.6" ry="4.2" fill="#e5a34a"/><path d="M4.3 5 C4.2 1.5 6 0.5 8 0.5 C10 0.5 11.8 1.5 11.7 5 C11 3.2 9.5 2.8 8 2.8 C6.5 2.8 5 3.2 4.3 5 Z" fill="#3a2a1e"/></svg><svg class="r" style="left:796px;top:455px;" width="16" height="16" viewBox="0 0 16 16"><rect x="0" y="0" width="16" height="16" fill="#f3f3ef"/><path d="M0.5 16 V0.5 H16" fill="none" stroke="#000" stroke-width="1.2"/><path d="M15.5 0.5 V15.5 H0.5" fill="none" stroke="#b8b8b0" stroke-width="1"/><rect x="6.5" y="5.5" width="6" height="6" fill="#fff" stroke="#c4c4c0"/></svg><div class="t" style="left:818px;top:432.50px;font-size:13px;line-height:16px;"><span style="color:#12129c;text-decoration:underline;font-weight:bold;">Andrei4ik93</span> [ON] (8 - 0:04:29)</div><div class="t" style="left:816px;top:450.50px;font-size:13px;line-height:16px;"><span style="color:#12129c;text-decoration:underline;">На Главной</span></div><div class="r" style="left:760px;top:475px;width:362px;height:1px;background-image:linear-gradient(to right,#b9b6aa 50%,transparent 50%);background-size:2px 1px;"></div><div class="t" style="left:760px;top:478.38px;font-size:9px;line-height:11px;letter-spacing:0.76px;-webkit-text-stroke-width:0.08px;">Браузер: Mozilla/5.0 (Windows NT 6.1; WOW64) AppleWebKit/537.36</div><div class="t" style="left:760px;top:491.33px;font-size:9px;line-height:11px;letter-spacing:0.76px;-webkit-text-stroke-width:0.08px;">(KHTML, like Gecko) Chrome/48.0.2564.109 Safari/537.36</div><div class="t" style="left:760px;top:504.28px;font-size:9px;line-height:11px;letter-spacing:0.76px;-webkit-text-stroke-width:0.08px;">Адрес IP: <span style="color:#12129c;text-decoration:underline;">109.194.110.151</span> <span style="color:#12129c;text-decoration:underline;">[?]</span></div><div class="r" style="left:755px;top:520px;width:372px;height:1px;background:#fdfdf8;"></div><div class="r" style="left:755px;top:521px;width:372px;height:91px;background:#ede9d8;border-left:1px solid #fbfaf2;box-sizing:border-box;"></div><svg class="r" style="left:760px;top:525.5px;" width="32" height="32" viewBox="0 0 32 32"><defs><linearGradient id="ga760" x1="0" y1="0" x2="0.25" y2="1"><stop offset="0" stop-color="#0c1535"/><stop offset="0.45" stop-color="#173e68"/><stop offset="1" stop-color="#3f88ac"/></linearGradient></defs><rect width="32" height="32" fill="url(#ga760)"/><path d="M12 31 C16 25 21 22 31 19 M19 32 C23 27 26 26 32 26" stroke="#a8d0e2" stroke-width="1.6" fill="none" opacity="0.6"/></svg><svg class="r" style="left:796px;top:526px;" width="16" height="16" viewBox="0 0 16 16"><path d="M1 15 C1 10.5 4 9.5 8 9.5 C12 9.5 15 10.5 15 15 Z" fill="#3fbf2f"/><path d="M2 14.5 C2 11 4.5 10.3 8 10.3" fill="none" stroke="#8ae070" stroke-width="0.8"/><ellipse cx="8" cy="5.6" rx="3.6" ry="4.2" fill="#e5a34a"/><path d="M4.3 5 C4.2 1.5 6 0.5 8 0.5 C10 0.5 11.8 1.5 11.7 5 C11 3.2 9.5 2.8 8 2.8 C6.5 2.8 5 3.2 4.3 5 Z" fill="#3a2a1e"/></svg><svg class="r" style="left:796px;top:547px;" width="16" height="16" viewBox="0 0 16 16"><rect x="0" y="0" width="16" height="16" fill="#f3f3ef"/><path d="M0.5 16 V0.5 H16" fill="none" stroke="#000" stroke-width="1.2"/><path d="M15.5 0.5 V15.5 H0.5" fill="none" stroke="#b8b8b0" stroke-width="1"/><rect x="6.5" y="5.5" width="6" height="6" fill="#fff" stroke="#c4c4c0"/></svg><div class="t" style="left:818px;top:524.50px;font-size:13px;line-height:16px;"><span style="color:#12129c;text-decoration:underline;font-weight:bold;">Antares</span> (FMod) [ON] (4 - 0:01:46)</div><div class="t" style="left:816px;top:542.50px;font-size:13px;line-height:16px;"><span style="color:#12129c;text-decoration:underline;">Форум</span> / <span style="color:#12129c;text-decoration:underline;">&gt;&gt;</span></div><div class="r" style="left:760px;top:567px;width:362px;height:1px;background-image:linear-gradient(to right,#b9b6aa 50%,transparent 50%);background-size:2px 1px;"></div><div class="t" style="left:760px;top:570.38px;font-size:9px;line-height:11px;letter-spacing:0.76px;-webkit-text-stroke-width:0.08px;">Браузер: Mozilla/5.0 (Windows NT 10.0; WOW64) AppleWebKit/537.36</div><div class="t" style="left:760px;top:583.33px;font-size:9px;line-height:11px;letter-spacing:0.76px;-webkit-text-stroke-width:0.08px;">(KHTML, like Gecko) Chrome/48.0.2564.109 Safari/537.36</div><div class="t" style="left:760px;top:596.28px;font-size:9px;line-height:11px;letter-spacing:0.76px;-webkit-text-stroke-width:0.08px;">Адрес IP: <span style="color:#12129c;text-decoration:underline;">93.116.243.112</span> <span style="color:#12129c;text-decoration:underline;">[?]</span></div><div class="r" style="left:755px;top:612px;width:372px;height:1px;background:#fdfdf8;"></div><div class="r" style="left:755px;top:613px;width:372px;height:103px;background:#f3f3f5;border-left:1px solid #fbfaf2;box-sizing:border-box;"></div><svg class="r" style="left:760px;top:616.5px;" width="32" height="32" viewBox="0 0 32 32"><rect width="32" height="32" fill="#228a5e"/><path d="M9 21 L15.5 7.5 M14.5 7.5 L23 21 M16.8 8.5 L21 16.5 M12.3 16 H20.3 M7.5 21 H11 M20.5 21 H24.5" stroke="#86d6ae" stroke-width="1.1" fill="none"/><rect x="11" y="25" width="10" height="2.2" fill="#5fae88"/></svg><svg class="r" style="left:796px;top:617px;" width="16" height="16" viewBox="0 0 16 16"><path d="M1 15 C1 10.5 4 9.5 8 9.5 C12 9.5 15 10.5 15 15 Z" fill="#3fbf2f"/><path d="M2 14.5 C2 11 4.5 10.3 8 10.3" fill="none" stroke="#8ae070" stroke-width="0.8"/><ellipse cx="8" cy="5.6" rx="3.6" ry="4.2" fill="#e5a34a"/><path d="M4.3 5 C4.2 1.5 6 0.5 8 0.5 C10 0.5 11.8 1.5 11.7 5 C11 3.2 9.5 2.8 8 2.8 C6.5 2.8 5 3.2 4.3 5 Z" fill="#3a2a1e"/></svg><svg class="r" style="left:796px;top:638px;" width="16" height="16" viewBox="0 0 16 16"><rect x="0" y="0" width="16" height="16" fill="#f3f3ef"/><path d="M0.5 16 V0.5 H16" fill="none" stroke="#000" stroke-width="1.2"/><path d="M15.5 0.5 V15.5 H0.5" fill="none" stroke="#b8b8b0" stroke-width="1"/><rect x="6.5" y="5.5" width="6" height="6" fill="#fff" stroke="#c4c4c0"/></svg><div class="t" style="left:818px;top:615.50px;font-size:13px;line-height:16px;"><span style="color:#12129c;text-decoration:underline;font-weight:bold;">ayzek</span> [ON] (2 - 0:01:09)</div><div class="t" style="left:816px;top:633.50px;font-size:13px;line-height:16px;"><span style="color:#12129c;text-decoration:underline;">На Главной</span></div><div class="r" style="left:760px;top:658px;width:362px;height:1px;background-image:linear-gradient(to right,#b9b6aa 50%,transparent 50%);background-size:2px 1px;"></div><div class="t" style="left:760px;top:661.38px;font-size:9px;line-height:11px;letter-spacing:0.76px;-webkit-text-stroke-width:0.08px;">Браузер: Opera Mini: Mozilla/5.0 (Linux; Android 4.4.2; SM-T311</div><div class="t" style="left:760px;top:674.33px;font-size:9px;line-height:11px;letter-spacing:0.76px;-webkit-text-stroke-width:0.08px;">Build/KOT49H) AppleWebKit/537.36 (KHTML, like Gecko) Version/4.0</div><div class="t" style="left:760px;top:687.28px;font-size:9px;line-height:11px;letter-spacing:0.76px;-webkit-text-stroke-width:0.08px;">Chrome/30.0.0.0 Safari/537.36</div><div class="t" style="left:760px;top:700.23px;font-size:9px;line-height:11px;letter-spacing:0.76px;-webkit-text-stroke-width:0.08px;">Адрес IP: <span style="color:#12129c;text-decoration:underline;">85.9.141.10</span> <span style="color:#12129c;text-decoration:underline;">[?]</span></div><div class="r" style="left:755px;top:716px;width:372px;height:1px;background:#fdfdf8;"></div><div class="r" style="left:755px;top:717px;width:372px;height:90px;background:#ede9d8;border-left:1px solid #fbfaf2;box-sizing:border-box;"></div><svg class="r" style="left:760px;top:721.5px;" width="32" height="32" viewBox="0 0 32 32"><rect width="32" height="32" fill="#fcfcfa"/><circle cx="16" cy="16" r="12.5" fill="#a8d04e"/><text x="11" y="22" font-family="Liberation Sans" font-size="16" fill="#fff">F</text></svg><svg class="r" style="left:796px;top:722px;" width="16" height="16" viewBox="0 0 16 16"><path d="M1 15 C1 10.5 4 9.5 8 9.5 C12 9.5 15 10.5 15 15 Z" fill="#3fbf2f"/><path d="M2 14.5 C2 11 4.5 10.3 8 10.3" fill="none" stroke="#8ae070" stroke-width="0.8"/><ellipse cx="8" cy="5.6" rx="3.6" ry="4.2" fill="#e5a34a"/><path d="M4.3 5 C4.2 1.5 6 0.5 8 0.5 C10 0.5 11.8 1.5 11.7 5 C11 3.2 9.5 2.8 8 2.8 C6.5 2.8 5 3.2 4.3 5 Z" fill="#3a2a1e"/></svg><svg class="r" style="left:796px;top:743px;" width="16" height="16" viewBox="0 0 16 16"><rect x="0" y="0" width="16" height="16" fill="#f3f3ef"/><path d="M0.5 16 V0.5 H16" fill="none" stroke="#000" stroke-width="1.2"/><path d="M15.5 0.5 V15.5 H0.5" fill="none" stroke="#b8b8b0" stroke-width="1"/><rect x="6.5" y="5.5" width="6" height="6" fill="#fff" stroke="#c4c4c0"/></svg><div class="t" style="left:818px;top:720.50px;font-size:13px;line-height:16px;"><span style="color:#12129c;text-decoration:underline;font-weight:bold;">fanatos</span> [ON] (2 - 0:02:50)</div><div class="t" style="left:816px;top:738.50px;font-size:13px;line-height:16px;"><span style="color:#12129c;text-decoration:underline;">Форум</span> / <span style="color:#12129c;text-decoration:underline;">&gt;&gt;</span></div><div class="r" style="left:760px;top:763px;width:362px;height:1px;background-image:linear-gradient(to right,#b9b6aa 50%,transparent 50%);background-size:2px 1px;"></div><div class="t" style="left:760px;top:766.38px;font-size:9px;line-height:11px;letter-spacing:0.76px;-webkit-text-stroke-width:0.08px;">Браузер: Mozilla/5.0 (Windows NT 6.1) AppleWebKit/537.36 (KHTML, like</div><div class="t" style="left:760px;top:779.33px;font-size:9px;line-height:11px;letter-spacing:0.76px;-webkit-text-stroke-width:0.08px;">Gecko) Chrome/48.0.2564.82 Safari/537.36 OPR/35.0.2066.37</div><div class="t" style="left:760px;top:792.28px;font-size:9px;line-height:11px;letter-spacing:0.76px;-webkit-text-stroke-width:0.08px;">Адрес IP: <span style="color:#12129c;text-decoration:underline;">5.165.146.255</span> <span style="color:#12129c;text-decoration:underline;">[?]</span></div><div class="r" style="left:755px;top:807px;width:372px;height:1px;background:#fdfdf8;"></div><div class="r" style="left:755px;top:808px;width:372px;height:59px;background:#f3f3f5;border-left:1px solid #fbfaf2;box-sizing:border-box;"></div><svg class="r" style="left:760px;top:813.5px;" width="32" height="32" viewBox="0 0 32 32"><rect width="32" height="32" fill="#151515"/><path d="M0 14 L6 8 L10 16 L14 8 L19 15 L24 9 L28 14 L32 10 V32 H0 Z" fill="#8a8a8a"/><path d="M3 30 L8 14 L13 28 M16 30 L20 14 L26 26" stroke="#e0e0e0" stroke-width="2.2" fill="none"/><path d="M6 20 L10 26 M19 20 L22 25" stroke="#202020" stroke-width="2.5"/></svg><svg class="r" style="left:796px;top:814px;" width="16" height="16" viewBox="0 0 16 16"><path d="M1 15 C1 10.5 4 9.5 8 9.5 C12 9.5 15 10.5 15 15 Z" fill="#3fbf2f"/><path d="M2 14.5 C2 11 4.5 10.3 8 10.3" fill="none" stroke="#8ae070" stroke-width="0.8"/><ellipse cx="8" cy="5.6" rx="3.6" ry="4.2" fill="#e5a34a"/><path d="M4.3 5 C4.2 1.5 6 0.5 8 0.5 C10 0.5 11.8 1.5 11.7 5 C11 3.2 9.5 2.8 8 2.8 C6.5 2.8 5 3.2 4.3 5 Z" fill="#3a2a1e"/></svg><svg class="r" style="left:796px;top:835px;" width="16" height="16" viewBox="0 0 16 16"><rect x="0" y="0" width="16" height="16" fill="#f3f3ef"/><path d="M0.5 16 V0.5 H16" fill="none" stroke="#000" stroke-width="1.2"/><path d="M15.5 0.5 V15.5 H0.5" fill="none" stroke="#b8b8b0" stroke-width="1"/><rect x="6.5" y="5.5" width="6" height="6" fill="#fff" stroke="#c4c4c0"/></svg><div class="t" style="left:818px;top:812.50px;font-size:13px;line-height:16px;"><span style="color:#12129c;text-decoration:underline;font-weight:bold;">Flash</span> [ON] (4 - 0:00:26)</div><div class="t" style="left:816px;top:830.50px;font-size:13px;line-height:16px;"><span style="color:#12129c;text-decoration:underline;">Форум</span> / <span style="color:#12129c;text-decoration:underline;">&gt;&gt;</span></div><div class="r" style="left:760px;top:855px;width:362px;height:1px;background-image:linear-gradient(to right,#b9b6aa 50%,transparent 50%);background-size:2px 1px;"></div><div class="r" style="left:1135px;top:97px;width:17px;height:738px;background:#f6f6f6;border-left:1px solid #e4e4e4;box-sizing:border-box;"></div><svg class="r" style="left:1136px;top:97px;" width="16" height="18" viewBox="0 0 16 18"><path d="M3.5 11.5 L8 6.5 L12.5 11.5 Z" fill="#606060"/></svg><div class="r" style="left:1136px;top:115px;width:15px;height:446px;box-sizing:border-box;border:1px solid #a9b5c3;background:linear-gradient(to right,#f6f9fd,#e9f0f8);border-radius:1px;"></div><svg class="r" style="left:1136px;top:817px;" width="16" height="18" viewBox="0 0 16 18"><path d="M3.5 6.5 L8 11.5 L12.5 6.5 Z" fill="#606060"/></svg><div class="r" style="left:0px;top:834px;width:1152px;height:1px;background:#40687c;"></div><div class="r" style="left:0px;top:835px;width:1152px;height:3px;background:linear-gradient(#82bdd8,#74b2d0);"></div><div class="r" style="left:21px;top:836px;width:20px;height:8px;background:#f4f8fa;border-radius:10px 10px 0 0;"></div><div class="r" style="left:161px;top:836px;width:157px;height:6px;box-sizing:border-box;border:1px solid #3e6f86;border-bottom:none;border-radius:2px 2px 0 0;background:rgba(255,255,255,0.12);"></div><div class="r" style="left:321px;top:836px;width:157px;height:6px;box-sizing:border-box;border:1px solid #3e6f86;border-bottom:none;border-radius:2px 2px 0 0;background:rgba(255,255,255,0.12);"></div><div class="r" style="left:481px;top:836px;width:155px;height:6px;box-sizing:border-box;border:1px solid #3e6f86;border-bottom:none;border-radius:2px 2px 0 0;background:rgba(255,255,255,0.12);"></div>
</body></html>
